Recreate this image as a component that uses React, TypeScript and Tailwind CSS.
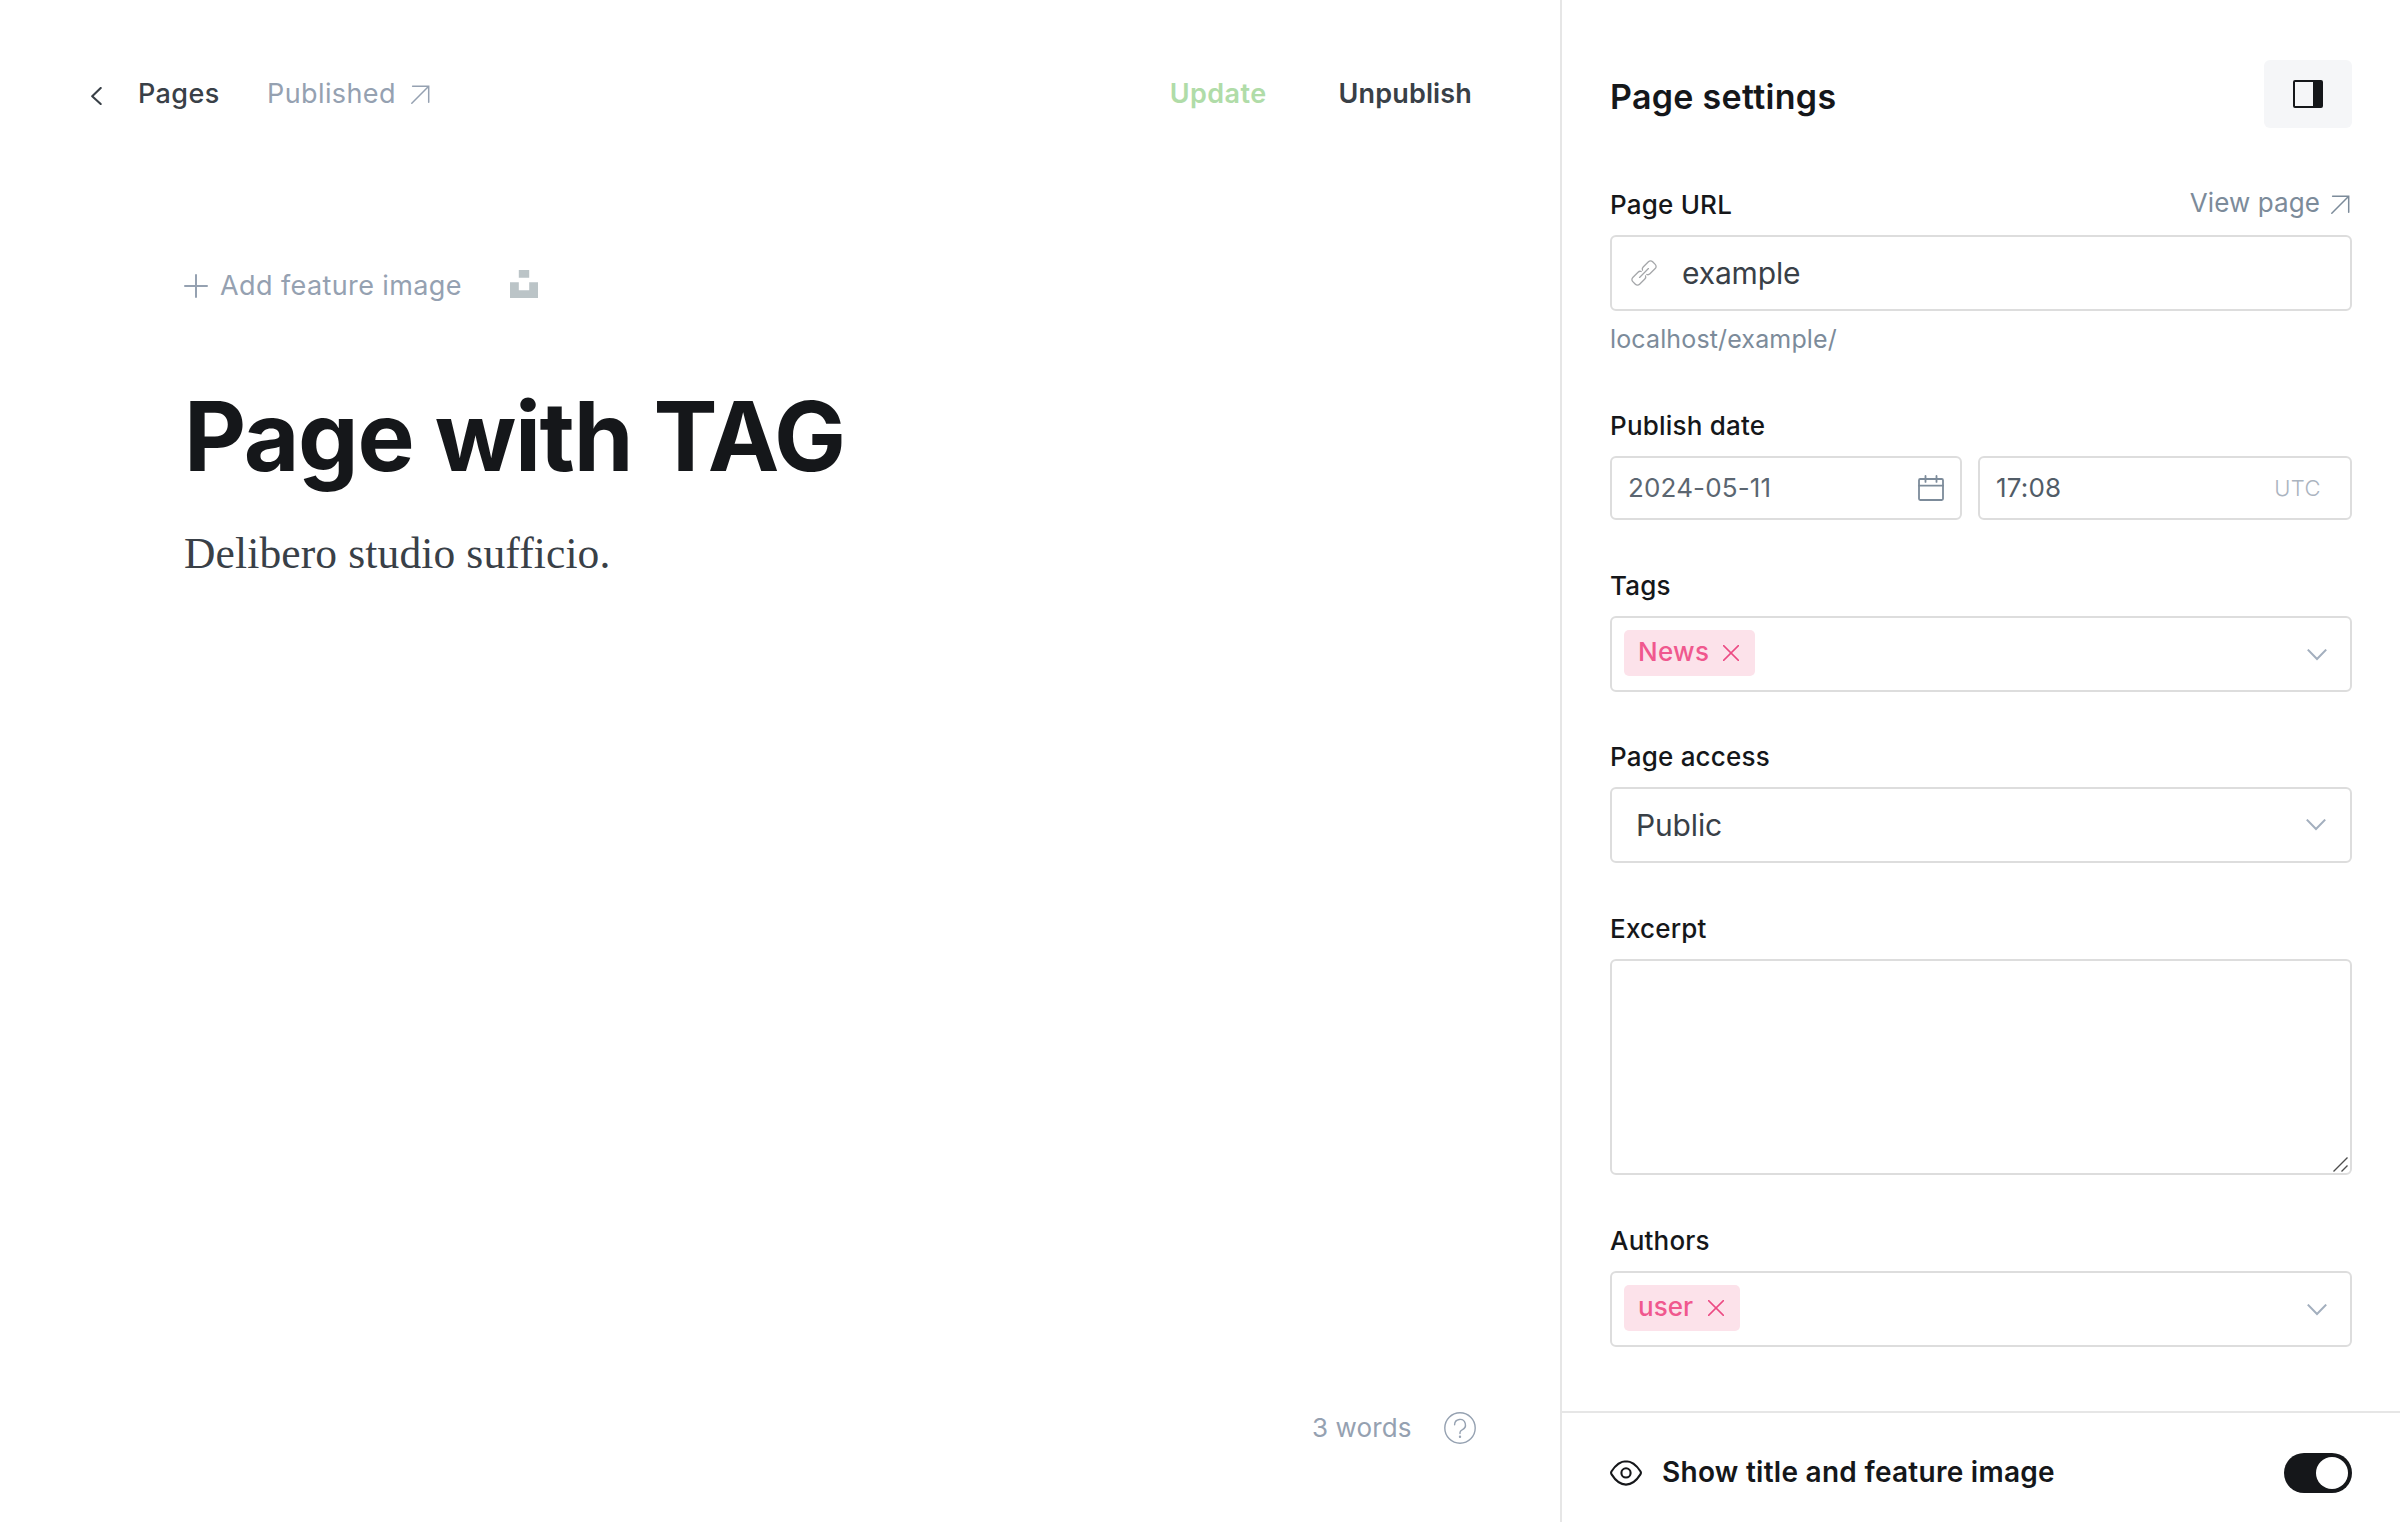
import type { ReactNode } from 'react';

function ArrowUpRight({ className }: { className: string }) {
  return (
    <svg viewBox="0 0 19 19" className={className} fill="none" stroke="currentColor" strokeWidth="1.5" strokeLinecap="round">
      <path d="M1.6 1.3h16.1v16M17.7 1.3L.8 18.2" />
    </svg>
  );
}

function Chevron({ className = '' }: { className?: string }) {
  return (
    <svg viewBox="0 0 20 12" className={`h-3 w-5 text-[#a3afbe] ${className}`} fill="none" stroke="currentColor" strokeWidth="2">
      <path d="M.8 .6L10 10 19.2 .6" />
    </svg>
  );
}

function LinkIcon() {
  return (
    <svg viewBox="0 0 24 24" className="size-[28px] text-[#a4a6a9]" fill="none" stroke="currentColor" strokeWidth="1.1" strokeLinecap="round" strokeLinejoin="round">
      <path d="M13.3 14.4c.4 1 .1 2-.6 2.7L8.2 21.6a2.5 2.5 0 0 1-3.6 0L2.4 19.4a2.5 2.5 0 0 1 0-3.600L6.900 11.300c.7-.7 1.700-1 2.700-.6" />
      <path d="M13.3 14.4c.4 1 .1 2-.6 2.7L8.2 21.6a2.5 2.5 0 0 1-3.6 0L2.4 19.4a2.5 2.5 0 0 1 0-3.600L6.900 11.300c.7-.7 1.700-1 2.700-.6" transform="rotate(180 12 12)" />
      <path d="M8.2 15.8l7.6-7.6" />
    </svg>
  );
}

function Calendar() {
  return (
    <svg viewBox="0 0 26 26" className="size-[26px] text-[#7c8b9a]" fill="none" stroke="currentColor" strokeWidth="1.8" strokeLinecap="round">
      <rect x="1" y="4" width="24" height="21" rx="1.2" />
      <path d="M1 10.7h24M7.5 .9v6M18.5 .9v6" />
    </svg>
  );
}

function Label({ children }: { children: ReactNode }) {
  return <div className="text-[26px] leading-[31px] font-medium tracking-[0.2px] text-[#15171a]">{children}</div>;
}

function Box({ className, children }: { className: string; children?: ReactNode }) {
  return <div className={`mt-[15px] flex rounded-[6px] border-2 border-[#dddddd] bg-white ${className}`}>{children}</div>;
}

function Chip({ className, children }: { className: string; children: ReactNode }) {
  return (
    <span className={`flex h-[46px] items-start justify-between rounded-[5px] bg-[#fce2ea] pt-[6px] pr-4 pl-[14px] text-[26px] leading-[31px] font-medium text-[#f0588e] ${className}`}>
      {children}
      <svg viewBox="0 0 16 16" className="mt-[9px] size-4 text-[#ec4a83]" fill="none" stroke="currentColor" strokeWidth="1.5" strokeLinecap="round">
        <path d="M.6 .6l14.8 14.8M15.4 .6L.6 15.4" />
      </svg>
    </span>
  );
}

function Editor() {
  return (
    <main className="flex h-full w-[1560px] flex-col">
      <header className="mt-[60px] flex h-[67px] items-center pr-[88px] pl-[91px] text-[27px] leading-[33px] tracking-[0.4px]">
        <svg viewBox="0 0 11 18" className="mt-[5px] h-[18px] w-[11px] text-[#394047]" fill="none" stroke="currentColor" strokeWidth="2.1" strokeLinecap="round" strokeLinejoin="round">
          <path d="M9.7 1L1.2 9.2l8.5 7.8" />
        </svg>
        <span className="ml-[36px] w-[129px] font-medium text-[#394047]">Pages</span>
        <span className="w-[144px] text-[#95a1b1]">Published</span>
        <ArrowUpRight className="mt-[2px] size-[19px] text-[#95a1b1]" />
        <span className="ml-auto font-semibold text-[#b0dca8]">Update</span>
        <span className="ml-[72px] font-semibold tracking-[0.15px] text-[#394047]">Unpublish</span>
      </header>

      <section className="px-[184px] pt-[142px]">
        <div className="flex h-[33px] items-center text-[27px] leading-[33px] tracking-[0.4px] text-[#95a1b1]">
          <svg viewBox="0 0 24 24" className="size-6" fill="none" stroke="currentColor" strokeWidth="2" strokeLinecap="round">
            <path d="M12 1v22M1 12h22" />
          </svg>
          <span className="ml-[12px] w-[290px]">Add feature image</span>
          <svg viewBox="0 0 28 28" className="-mt-[3px] size-7 text-[#bbc4c7]" fill="currentColor">
            <path d="M8.8 0h10.4v7.8H8.8zM0 12.3h8.8v7.9h10.4v-7.9H28V28H0z" />
          </svg>
        </div>
        <h1 className="mt-[76px] text-[96px] leading-[116px] font-bold tracking-[-1.33px] text-[#15171a]">Page with TAG</h1>
        <p className="mt-[36px] font-['Liberation_Serif',serif] text-[43.5px] leading-[46px] tracking-[0.13px] text-[#394047]">
          Delibero studio sufficio.
        </p>
      </section>

      <footer className="mt-auto mb-[78px] flex h-8 justify-end pr-[84px] text-[#95a1b1]">
        <span className="w-[132px] text-[26px] leading-[31px] tracking-[0.1px]">3 words</span>
        <svg viewBox="0 0 32 32" className="size-8" fill="none" stroke="currentColor" strokeWidth="1.4" strokeLinecap="round">
          <circle cx="16" cy="16" r="15.2" />
          <path d="M10.6 12.8a5.4 5.4 0 1 1 7.5 5c-1.4.6-2.1 1.5-2.1 2.8v1" />
          <circle cx="16" cy="24.8" r=".5" fill="currentColor" />
        </svg>
      </footer>
    </main>
  );
}

function Settings() {
  return (
    <aside className="flex h-full w-[840px] flex-col border-l-2 border-[#e6e6e6]">
      <div className="px-12 pt-[60px]">
        <div className="flex h-[68px] items-start justify-between">
          <h2 className="mt-4 text-[34px] leading-[41px] font-semibold tracking-[0.3px] text-[#15171a]">Page settings</h2>
          <button className="flex h-[68px] w-[88px] items-center justify-center rounded-[6px] bg-[#f5f6f8]">
            <svg viewBox="0 0 30 28" className="h-[28px] w-[30px] text-[#15171a]" fill="none" stroke="currentColor" strokeWidth="2">
              <rect x="1" y="1" width="28" height="26" rx="1" />
              <path d="M20 1h8.5v26H20z" fill="currentColor" stroke="none" />
            </svg>
          </button>
        </div>

        <div className="mt-[61px] flex justify-between">
          <Label>Page URL</Label>
          <a className="-mt-[2px] flex text-[26px] leading-[31px] tracking-[0.1px] text-[#7c8b9a]">
            View page
            <ArrowUpRight className="mt-[8px] mr-[2px] ml-[11px] size-[19px]" />
          </a>
        </div>
        <Box className="h-[76px] items-center pl-[18px]">
          <LinkIcon />
          <span className="ml-[24px] text-[30px] leading-[36px] tracking-[-0.15px] text-[#394047]">example</span>
        </Box>
        <p className="mt-[13px] text-[25px] leading-[30px] tracking-[0.14px] text-[#7c8b9a]">localhost/example/</p>

        <div className="mt-14">
          <Label>Publish date</Label>
          <div className="flex gap-4">
            <Box className="h-16 w-[352px] items-center justify-between pr-4 pl-4 text-[26px] leading-[31px] tracking-[0.14px] text-[#5b6671]">
              <span className="-mt-px">2024-05-11</span>
              <Calendar />
            </Box>
            <Box className="h-16 w-[374px] items-center justify-between pr-[29px] pl-4 text-[26px] leading-[31px] tracking-[0.17px] text-[#515c67]">
              <span className="-mt-px">17:08</span>
              <span className="text-[22px] leading-[26px] font-light tracking-[0.4px] text-[#abb4bf]">UTC</span>
            </Box>
          </div>
        </div>

        <div className="mt-[50px]">
          <Label>Tags</Label>
          <Box className="h-[76px] justify-between pt-3 pr-[23px] pl-3">
            <Chip className="w-[131px] tracking-[0.3px]">News</Chip>
            <Chevron className="mt-[19px]" />
          </Box>
        </div>

        <div className="mt-[49px]">
          <Label>Page access</Label>
          <Box className="h-[76px] items-center justify-between pr-[24px] pl-6">
            <span className="text-[30px] leading-[36px] tracking-[-0.15px] text-[#394047]">Public</span>
            <Chevron />
          </Box>
        </div>

        <div className="mt-[50px]">
          <Label>Excerpt</Label>
          <Box className="h-[216px] items-end justify-end pr-[2px] pb-[1px]">
            <svg viewBox="0 0 15 15" className="size-[15px] text-[#4d4d4d]" fill="none" stroke="currentColor" strokeWidth="1.4">
              <path d="M.5 14.5l14-14M8.5 14.5l6-6" />
            </svg>
          </Box>
        </div>

        <div className="mt-[50px]">
          <Label>Authors</Label>
          <Box className="h-[76px] justify-between pt-3 pr-[23px] pl-3">
            <Chip className="w-[116px]">user</Chip>
            <Chevron className="mt-[19px]" />
          </Box>
        </div>
      </div>

      <div className="mt-auto flex h-[111px] items-start border-t-2 border-[#e6e6e6] px-12 pt-10">
        <svg viewBox="0 0 32 26" className="mt-[7px] h-[26px] w-8 text-[#15171a]" fill="none" stroke="currentColor" strokeWidth="2.1" strokeLinejoin="round">
          <path d="M16 1.2C10.4 1.2 5 6 1.6 11.2c-.7 1.1-.7 2.1 0 3.2C5 19.8 10.4 24.6 16 24.6s11-4.8 14.4-10.2c.7-1.1.7-2.1 0-3.2C27 6 21.6 1.2 16 1.2z" />
          <circle cx="16" cy="12.9" r="4.6" />
        </svg>
        <span className="mt-[2px] ml-[20px] text-[28px] leading-[34px] font-semibold tracking-[0.27px] text-[#15171a]">Show title and feature image</span>
        <span className="ml-auto flex h-10 w-[68px] items-center justify-end rounded-full bg-[#15171a] pr-1">
          <span className="size-8 rounded-full bg-white" />
        </span>
      </div>
    </aside>
  );
}

export default function App() {
  return (
    <div className="flex h-[1522px] w-[2400px] overflow-hidden bg-white font-['Inter',sans-serif]">
      <Editor />
      <Settings />
    </div>
  );
}
